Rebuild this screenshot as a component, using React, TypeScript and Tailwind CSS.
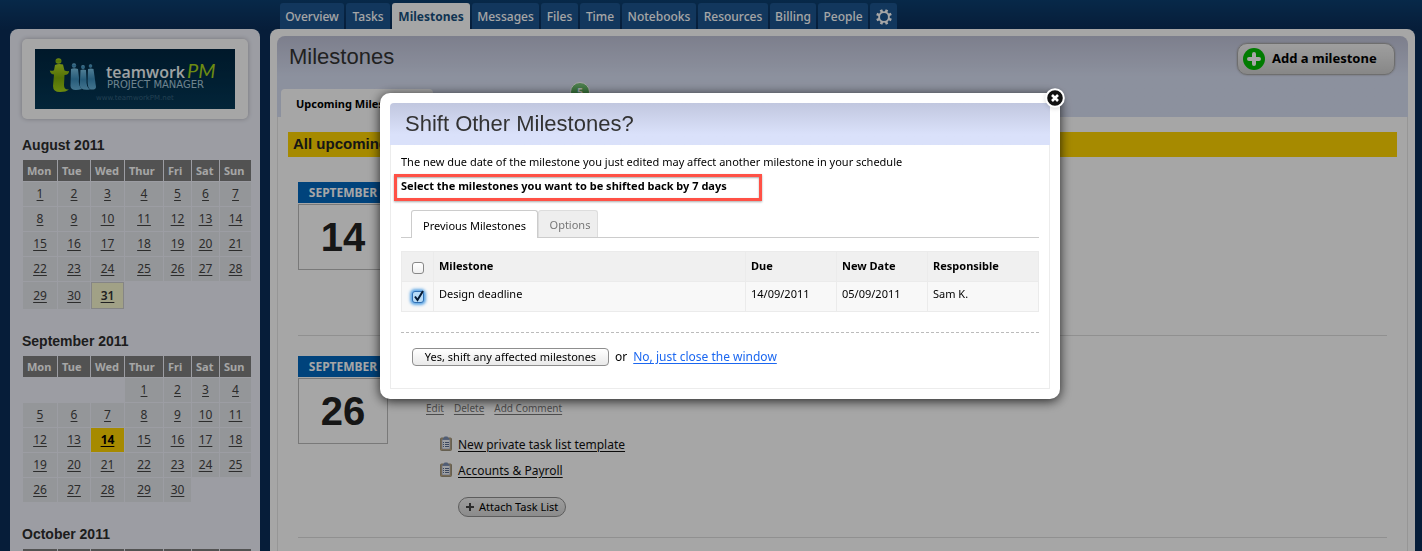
import React from "react";

const sans = "font-['Noto_Sans','Open_Sans',sans-serif]";
const arial = "font-['Liberation_Sans',Arial,sans-serif]";

const navTabs = [
  { label: "Overview", width: "w-16" },
  { label: "Tasks", width: "w-11" },
  { label: "Milestones", width: "w-[78px]", active: true },
  { label: "Messages", width: "w-[67px]" },
  { label: "Files", width: "w-[37px]" },
  { label: "Time", width: "w-10" },
  { label: "Notebooks", width: "w-[74px]" },
  { label: "Resources", width: "w-[70px]" },
  { label: "Billing", width: "w-[46px]" },
  { label: "People", width: "w-[50px]" },
];

const weekdays = [
  { label: "Mon", width: "w-[34px]" },
  { label: "Tue", width: "w-8" },
  { label: "Wed", width: "w-[33px]" },
  { label: "Thur", width: "w-[38px]" },
  { label: "Fri", width: "w-[27px]" },
  { label: "Sat", width: "w-[27px]" },
  { label: "Sun", width: "w-[31px]" },
];

function GearIcon() {
  return (
    <svg viewBox="0 0 16 16" className="size-4" aria-hidden="true">
      <circle cx="8" cy="8" r="4.9" fill="none" stroke="#fff" strokeWidth="1.9" />
      {[22, 67, 112, 157, 202, 247, 292, 337].map((a) => (
        <rect key={a} x="6.7" y="0.1" width="2.6" height="2.8" fill="#fff" transform={`rotate(${a} 8 8)`} />
      ))}
    </svg>
  );
}

function Logo() {
  return (
    <svg viewBox="0 0 200 60" className="block w-full" role="img" aria-label="teamworkPM Project Manager">
      <defs>
        <linearGradient id="logoBg" x1="0" y1="0" x2="0" y2="1">
          <stop offset="0" stopColor="#002641" />
          <stop offset="1" stopColor="#053958" />
        </linearGradient>
        <linearGradient id="logoGreen" x1="0" y1="0" x2="0" y2="1">
          <stop offset="0" stopColor="#b5dc22" />
          <stop offset="0.5" stopColor="#7fae0a" />
          <stop offset="1" stopColor="#a5d416" />
        </linearGradient>
        <linearGradient id="logoBlue" x1="0" y1="0" x2="0" y2="1">
          <stop offset="0" stopColor="#7cc3e6" />
          <stop offset="0.5" stopColor="#3c8dbb" />
          <stop offset="1" stopColor="#68b4dc" />
        </linearGradient>
      </defs>
      <rect width="200" height="60" fill="url(#logoBg)" />
      <ellipse cx="23.5" cy="12" rx="3" ry="2.8" fill="url(#logoGreen)" />
      <path
        d="M20 16 Q23.5 14.5 28 15.5 L29.5 21.5 Q32 22.5 34 22 Q34 26 29.5 26 L29 36 Q29 41 34 40.5 Q31 43 25 43 Q18 43 18 37 L19 25.5 Q15.5 25.5 14.8 21.5 Q17 22.3 19 21.2 Z"
        fill="url(#logoGreen)"
      />
      <g fill="url(#logoBlue)">
        <circle cx="39" cy="16.5" r="2.2" />
        <circle cx="48" cy="18" r="2" />
        <circle cx="55.5" cy="17" r="1.8" />
        <path d="M36 20 Q39 18.5 43 20 L44 29 Q43 37 47 40 Q36 43 35.5 37 Z" />
        <path d="M45.5 21 Q48 19.8 51 21 L51.5 31 Q51 38 55 40.5 Q45 42 44.8 36 Z" />
        <path d="M53 20 Q56 18.8 58.5 20 L61 38 Q61 41 55.5 40.5 Q52.5 39 52.6 32 Z" />
      </g>
      <text x="71" y="29" fill="#f4fafa" className="font-['Open_Sans',sans-serif] text-[16px] font-semibold">
        teamwork
      </text>
      <text x="152" y="29" fill="#a8d61c" className="font-['Lato',sans-serif] text-[20px] italic">
        PM
      </text>
      <text x="72" y="39" fill="#a9c9dc" className="font-['DejaVu_Sans',sans-serif] text-[10px]">
        PROJECT MANAGER
      </text>
      <text x="61" y="51" fill="#35637f" className="font-['DejaVu_Sans',sans-serif] text-[7px]">
        www.teamworkPM.net
      </text>
    </svg>
  );
}

type CalendarProps = { title: string; offset: number; days: number; today?: number; due?: number };

function Calendar({ title, offset, days, today, due }: CalendarProps) {
  const cells = Array.from({ length: 35 }, (_, i) => {
    const d = i - offset + 1;
    return d >= 1 && d <= days ? d : null;
  });
  const rows = [0, 1, 2, 3, 4].map((r) => cells.slice(r * 7, r * 7 + 7));
  return (
    <section className="mb-[21px]">
      <h2 className={`${arial} mb-1 text-[14px] leading-[20px] font-bold text-[#2d2d2d]`}>{title}</h2>
      <table className="w-[230px] table-fixed border-separate border-spacing-px">
        <thead>
          <tr>
            {weekdays.map((d) => (
              <th
                key={d.label}
                className={`${d.width} h-[21px] bg-[#7e7e7e] p-0 pl-1 text-left text-[11px] leading-4 font-bold text-white`}
              >
                {d.label}
              </th>
            ))}
          </tr>
        </thead>
        <tbody>
          {rows.map((row, r) => (
            <tr key={r}>
              {row.map((d, c) => {
                let look = "h-6 bg-[#e4e7eb] text-[#444]";
                if (d === null) look = "h-6 bg-transparent";
                else if (d === today) look = "h-[27px] border border-[#ccc] bg-[#f7f8ce] font-semibold text-[#333]";
                else if (d === due) look = "h-6 bg-[#ffd400] font-bold text-black";
                return (
                  <td key={c} className={`p-0 text-center text-[12px] leading-4 ${look}`}>
                    {d !== null && (
                      <a href={`#day-${d}`} className="underline underline-offset-2">
                        {d}
                      </a>
                    )}
                  </td>
                );
              })}
            </tr>
          ))}
        </tbody>
      </table>
    </section>
  );
}

function DateBox({ day }: { day: number }) {
  return (
    <div className="w-[90px] shrink-0">
      <div className="h-[21px] bg-[#0067bf] text-center text-[12px] leading-[21px] font-bold text-white">SEPTEMBER</div>
      <div
        className={`${arial} mt-px h-[66px] border border-[#bbb] text-center text-[40px] leading-[64px] font-bold text-[#222]`}
      >
        {day}
      </div>
    </div>
  );
}

function ClipboardIcon() {
  return (
    <svg viewBox="0 0 12 15" className="mb-1 h-[15px] w-3" aria-hidden="true">
      <rect x="0.5" y="2" width="11" height="12.5" rx="1" fill="#c9a873" stroke="#9c937c" />
      <rect x="2" y="3.5" width="8" height="9.5" fill="#f3f6fb" stroke="#8495b5" strokeWidth="0.6" />
      <path d="M3 3.800V2Q4.200 2 4.500 0.500H7.500Q7.800 2 9 2V3.800Z" fill="#7c8fb4" />
      <path d="M3 6.500H4M5 6.500H9M3 8.500H4M5 8.500H9M3 10.500H4M5 10.500H9" stroke="#4a5e85" strokeWidth="0.9" />
    </svg>
  );
}

function Sidebar() {
  return (
    <aside className="w-[250px] shrink-0 rounded-t-lg bg-[#f0f2fb] pt-2.5 pr-2 pl-3">
      <div className="mb-[16px] w-[226px] rounded-[5px] bg-white px-[13px] py-2.5 shadow-[0_0_5px_#b4b4bd]">
        <Logo />
      </div>
      <Calendar title="August 2011" offset={0} days={31} today={31} />
      <Calendar title="September 2011" offset={3} days={30} due={14} />
      <Calendar title="October 2011" offset={5} days={31} />
    </aside>
  );
}

function Dialog() {
  const th = "h-[30px] border border-[#ebebeb] bg-[#f0f0f0] p-0 pb-0.5 pl-[5px] text-left font-bold";
  const td = "h-[30px] border border-[#ebebeb] bg-[#f8f8f8] p-0 pb-1.5 pl-[5px] align-middle";
  return (
    <div className="fixed inset-0 flex items-start justify-center bg-black/35 pt-[93px] pl-[18px]">
      <div
        role="dialog"
        aria-labelledby="dialog-title"
        className="relative w-[680px] rounded-[10px] bg-white p-2.5 text-[11px] leading-4 text-black shadow-[0_2px_12px_rgba(0,0,0,0.8)]"
      >
        <button type="button" aria-label="Close" className="absolute -top-[5px] -right-[5px] drop-shadow-sm">
          <svg viewBox="0 0 20 20" className="size-5">
            <circle cx="10" cy="10" r="8.8" fill="#111" stroke="#fff" strokeWidth="2" />
            <path d="M7 7L13 13M13 7L7 13" stroke="#fff" strokeWidth="2.6" />
          </svg>
        </button>
        <h2
          id="dialog-title"
          className={`${arial} rounded-t bg-linear-to-b from-[#c1c7df] to-[#dae1fa] to-75% pl-[15px] text-[22px] leading-[42px] text-[#333]`}
        >
          Shift Other Milestones?
        </h2>
        <div className="border border-t-0 border-[#ececec] px-2.5 pt-[9px] pb-[22px]">
          <p className="mb-1">
            The new due date of the milestone you just edited may affect another milestone in your schedule
          </p>
          <p className="-ml-[7px] h-[27px] w-[368px] border-3 border-[#ff5146] pl-1 leading-[18px] font-bold whitespace-nowrap shadow-[0_1px_2px_#aaa,inset_0_1px_2px_#aaa]">
            Select the milestones you want to be shifted back by 7 days
          </p>
          <div role="tablist" className="mt-[9px] mb-[13px] flex h-[28px] items-end border-b border-[#ccc] pl-2.5">
            <button
              type="button"
              role="tab"
              aria-selected="true"
              className="-mb-px h-[28px] w-[127px] rounded-t-[3px] border border-b-0 border-[#ccc] bg-white pt-0.5"
            >
              Previous Milestones
            </button>
            <button
              type="button"
              role="tab"
              aria-selected="false"
              className="h-[27px] w-[60px] rounded-t-[3px] border border-b-0 border-[#ddd] bg-[#eee] pt-0.5 pl-1 text-[#777]"
            >
              Options
            </button>
          </div>
          <table className="w-full table-fixed border-collapse text-[11px] leading-4">
            <thead>
              <tr>
                <th className={`${th} w-8`}>
                  <input
                    type="checkbox"
                    aria-label="Select all milestones"
                    className="mt-1 ml-[5px] block size-3 appearance-none rounded-[3px] border border-[#888] bg-linear-to-b from-white to-[#f0f0f0]"
                  />
                </th>
                <th className={th}>Milestone</th>
                <th className={`${th} w-[91px]`}>Due</th>
                <th className={`${th} w-[91px]`}>New Date</th>
                <th className={`${th} w-[111px]`}>Responsible</th>
              </tr>
            </thead>
            <tbody>
              <tr>
                <td className={td}>
                  <span className="relative mt-1.5 ml-[5px] block size-3">
                    <input
                      type="checkbox"
                      defaultChecked
                      aria-label="Design deadline"
                      className="block size-3 appearance-none rounded-[3px] border border-[#2f6fb4] bg-[#b8dcf8] shadow-[0_0_3px_2px_#5ea6e4]"
                    />
                    <svg viewBox="0 0 12 12" className="pointer-events-none absolute inset-0 size-3 overflow-visible">
                      <path d="M3 5.500L5.500 9L11 0" fill="none" stroke="#061a33" strokeWidth="2" />
                    </svg>
                  </span>
                </td>
                <td className={td}>Design deadline</td>
                <td className={td}>14/09/2011</td>
                <td className={td}>05/09/2011</td>
                <td className={td}>Sam K.</td>
              </tr>
            </tbody>
          </table>
          <div className="mt-5 flex items-center border-t border-dashed border-[#bbb] pt-[15px] pl-[11px] text-[12px]">
            <button
              type="button"
              className="h-[18px] w-[197px] rounded-[4px] border border-[#8e8e8e] bg-linear-to-b from-white to-[#e9e9e9] text-[11px] leading-4"
            >
              Yes, shift any affected milestones
            </button>
            <span className="mx-[6px]">or</span>
            <a href="#close" className="text-[#1b67f0] underline underline-offset-2">
              No, just close the window
            </a>
          </div>
        </div>
      </div>
    </div>
  );
}

export default function App() {
  return (
    <div className={`${sans} h-screen overflow-hidden bg-[#0a2d58]`}>
      <div className="flex min-h-full flex-col bg-linear-to-b from-[#0c3f70] to-[#0a2d58] to-[30px]">
        <nav className="flex h-[29px] items-end gap-0.5 pl-[280px]">
          {navTabs.map((t) => (
            <a
              key={t.label}
              href={`#${t.label.toLowerCase()}`}
              className={`${t.width} h-[26px] rounded-t-[3px] text-center text-[12px] leading-[27px] ${
                t.active ? "bg-white font-bold text-[#17507f]" : "bg-[#1c5590] font-medium text-white"
              }`}
            >
              {t.label}
            </a>
          ))}
          <a
            href="#settings"
            aria-label="Settings"
            className="flex h-[26px] w-[27px] items-center justify-center rounded-t-[3px] bg-[#1c5590] pt-0.5"
          >
            <GearIcon />
          </a>
        </nav>
        <div className="flex flex-1 gap-2.5 pr-[7px] pl-2.5">
          <Sidebar />
          <main className="min-w-0 flex-1 rounded-t-lg bg-white px-[7px] pt-[7px]">
            <header className="flex h-[81px] flex-col justify-between rounded-t-lg bg-linear-to-b from-[#c0c3d8] to-[#d8dff3] to-50%">
              <div className="flex items-start justify-between pr-[13px] pl-3">
                <h1 className={`${arial} text-[22px] leading-[42px] text-[#333]`}>Milestones</h1>
                <button
                  type="button"
                  className="mt-[7px] flex h-8 w-[158px] items-center gap-[7px] rounded-[10px] border border-[#aaa] bg-linear-to-b from-[#f4f4f4] to-[#d0d0d0] pl-[5px] text-[13px] font-bold text-black shadow-[0_0_2px_#999]"
                >
                  <svg viewBox="0 0 22 22" className="size-[22px]" aria-hidden="true">
                    <circle cx="11" cy="11" r="11" fill="#00bd00" />
                    <path d="M11 6V16M6 11H16" stroke="#fff" strokeWidth="4" strokeLinecap="round" />
                  </svg>
                  Add a milestone
                </button>
              </div>
              <div className="relative flex pl-1">
                <a
                  href="#upcoming"
                  className="h-[28px] w-[152px] rounded-t-[4px] bg-white pl-[15px] text-[11px] leading-[30px] font-bold text-black"
                >
                  Upcoming Milestones
                </a>
                <span className="absolute -top-[7px] left-[293px] size-5 rounded-full border border-white bg-linear-to-b from-[#7cc67c] to-[#2fa23d] text-center text-[10px] leading-[18px] font-bold text-white">
                  5
                </span>
              </div>
            </header>
            <div className="h-full border-x border-[#e6e6e6] px-2.5 pt-[15px]">
              <h2 className={`${arial} bg-[#ffd400] pl-[5px] text-[15px] leading-[24px] pb-px font-bold text-[#222]`}>
                All upcoming milestones
              </h2>
              <div className="mx-2.5">
                <article className="flex h-[179px] border-b border-[#ddd] pt-[25px]">
                  <DateBox day={14} />
                </article>
                <article className="flex h-[202px] border-b border-[#ddd] pt-5">
                  <DateBox day={26} />
                  <div className="pt-[44px] pl-[38px]">
                    <div className="flex gap-2.5 text-[10px] leading-4 text-[#777]">
                      <a href="#edit" className="underline underline-offset-2">Edit</a>
                      <a href="#delete" className="underline underline-offset-2">Delete</a>
                      <a href="#comment" className="underline underline-offset-2">Add Comment</a>
                    </div>
                    <ul className="mt-4 ml-3.5 text-[12px] leading-[26px] text-[#111]">
                      {["New private task list template", "Accounts & Payroll"].map((name) => (
                        <li key={name} className="flex items-center gap-1.5">
                          <ClipboardIcon />
                          <a href="#tasklist" className="underline underline-offset-2">{name}</a>
                        </li>
                      ))}
                    </ul>
                    <button
                      type="button"
                      className="mt-[13px] ml-8 flex h-5 w-[108px] items-center gap-[5px] rounded-full border border-[#8f8f8f] bg-linear-to-b from-[#f2f2f2] to-[#d6d6d6] pl-[7px] text-[11px] leading-4 text-black"
                    >
                      <svg viewBox="0 0 8 8" className="size-2" aria-hidden="true">
                        <path d="M4 0V8M0 4H8" stroke="#444" strokeWidth="2" />
                      </svg>
                      Attach Task List
                    </button>
                  </div>
                </article>
              </div>
            </div>
          </main>
        </div>
      </div>
      <Dialog />
    </div>
  );
}
